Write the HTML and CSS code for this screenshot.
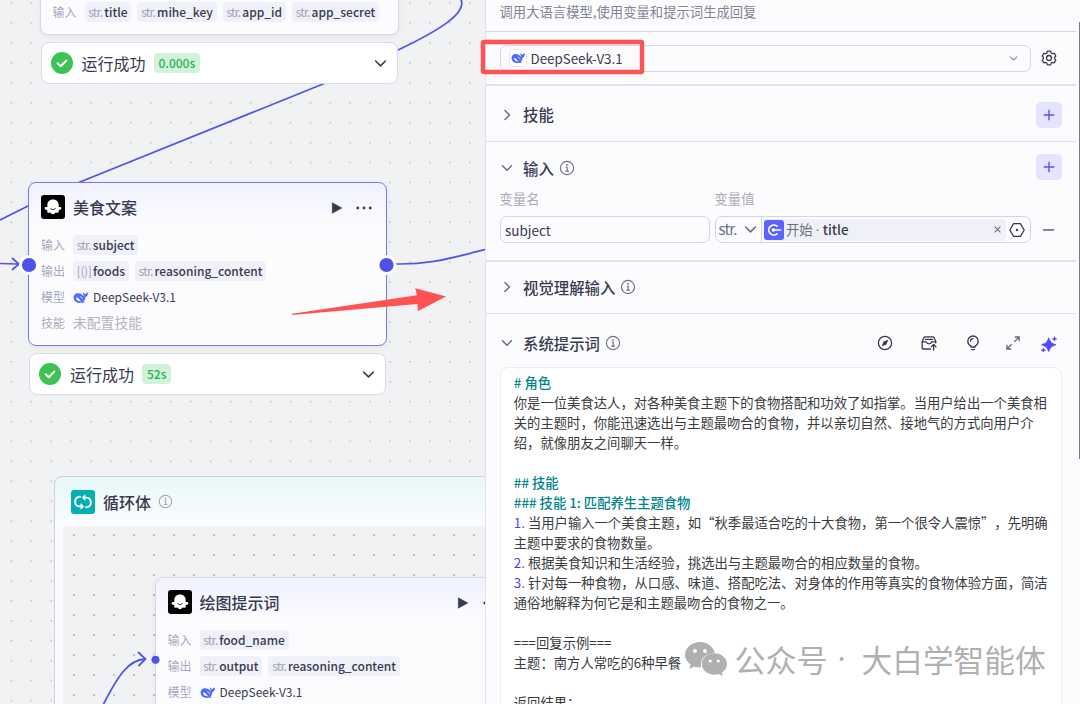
FILE: index.html
```html
<!DOCTYPE html>
<html lang="zh-CN">
<head>
<meta charset="UTF-8">
<meta name="viewport" content="width=device-width, initial-scale=1.0">
<title>工作流编辑</title>
<link rel="stylesheet" href="styles.css">
</head>
<body>
  <!-- Shared icons -->
  <svg class="sprite" width="0" height="0">
    <symbol id="whale" viewBox="0 0 24 24">
      <path fill="#4d6bfe" d="M13 6.500C15 7.800 16.500 9.600 18.300 10.200 17.200 8.400 15.700 7 15.600 3.800c1.700.7 2.700 1.700 3.100 3.200 1-1.600 2.600-1.800 5.100-3.200.4 4-1.300 6.800-4 7.900-.3 3.200-1.400 5.600-3.200 7.100l1.700 1.300c-1.600.8-2.900.6-4.100-.1C8.500 22 1.800 19.600 1 13.300.4 8.700 3 5 7.500 5c2.200 0 4 .5 5.500 1.500z"/>
      <path fill="#fff" d="M4.800 12.200c3-.6 4.600 1.800 6.200 3.600.8.900 1.600 1.500 2.600 1.800-4.200.9-8.500-1.200-8.800-5.400z"/>
      <path d="M12.300 11c1.500.1 2.500 1.100 2.900 2.600" fill="none" stroke="#fff" stroke-width="1.300" stroke-linecap="round"/>
    </symbol>
    <symbol id="bot" viewBox="0 0 24 24">
      <rect width="24" height="24" rx="3" fill="#000"/>
      <path fill="#fff" d="M12 4.500c-3.500 0-5.700 2.400-5.700 5.700v1.900c-1.500-.4-2.600 0-2.700.9-.1 1.200 1.100 1.900 2.700 1.900-.4 1.600.1 2.800 1.400 2.900.6.100 1.200-.1 1.600-.5.4 1.100 1.400 1.900 2.700 1.900s2.300-.8 2.700-1.900c.4.400 1 .6 1.600.5 1.300-.1 1.800-1.300 1.400-2.900 1.600 0 2.800-.7 2.700-1.900-.1-.9-1.200-1.300-2.700-.9v-1.900c0-3.300-2.200-5.700-5.700-5.700z"/>
      <path d="M9.700 13.800q2.300 2.300 4.600 0" fill="none" stroke="#000" stroke-width=".8" stroke-linecap="round"/>
    </symbol>
    <symbol id="info" viewBox="0 0 16 16">
      <circle cx="8" cy="8" r="6.600" fill="none" stroke="currentColor" stroke-width="1.100"/>
      <path d="M6.600 7.200H8.200V11M6.300 11.100H10" fill="none" stroke="currentColor" stroke-width="1.100"/>
      <circle cx="8" cy="4.900" r=".9" fill="currentColor"/>
    </symbol>
    <symbol id="down" viewBox="0 0 12 12">
      <path d="M1.500 3.700L6 8.200l4.500-4.500" fill="none" stroke="currentColor" stroke-width="1.500" stroke-linecap="round" stroke-linejoin="round"/>
    </symbol>
    <symbol id="right" viewBox="0 0 12 12">
      <path d="M4 1.500L8.500 6 4 10.500" fill="none" stroke="currentColor" stroke-width="1.500" stroke-linecap="round" stroke-linejoin="round"/>
    </symbol>
    <symbol id="check" viewBox="0 0 22 22">
      <circle cx="11" cy="11" r="11" fill="#3ec254"/>
      <path d="M6.600 11.300l3.100 3 5.700-5.800" fill="none" stroke="#fff" stroke-width="2" stroke-linecap="round" stroke-linejoin="round"/>
    </symbol>
    <symbol id="plus" viewBox="0 0 12 12">
      <path d="M6 .7v10.600M.7 6h10.600" stroke="#5b52ff" stroke-width="1.400" fill="none"/>
    </symbol>
    <symbol id="play" viewBox="0 0 12 12">
      <path d="M1.300.8v10.400L10.800 6z" fill="#383b4f" stroke="#383b4f" stroke-width=".6" stroke-linejoin="round"/>
    </symbol>
    <symbol id="more" viewBox="0 0 16 4">
      <g fill="#383b4f"><circle cx="1.800" cy="2" r="1.400"/><circle cx="8" cy="2" r="1.400"/><circle cx="14.200" cy="2" r="1.400"/></g>
    </symbol>
  </svg>

  <div class="app">
    <!-- Workflow canvas -->
    <div class="canvas">
      <svg class="layer" width="485" height="704">
        <defs>
          <pattern id="dots" x="10.600" y="2.200" width="19.930" height="19.930" patternUnits="userSpaceOnUse">
            <rect width="1.500" height="1.500" fill="#b9bbc1"/>
          </pattern>
        </defs>
        <rect width="485" height="704" fill="url(#dots)"/>
        <g fill="none" stroke="#5154ea" stroke-width="1.700">
          <path d="M460 -2C470 12 438 31 398 50L323 84L80 182L28 206L0 220"/>
          <path d="M396 264C432 264.500 450 258 486 249.500"/>
          <path d="M0 263.500L18 264M12 258l7 6-7 6"/>
        </g>
      </svg>

      <div class="node node-start">
        <div class="row">
          <span class="key">输入</span>
          <span class="chip"><i>str.</i>title</span>
          <span class="chip"><i>str.</i>mihe_key</span>
          <span class="chip"><i>str.</i>app_id</span>
          <span class="chip"><i>str.</i>app_secret</span>
        </div>
      </div>
      <div class="status status-start">
        <svg width="22" height="22"><use href="#check"/></svg>
        <span class="status-text">运行成功</span>
        <span class="time">0.000s</span>
        <svg class="push" width="13" height="13"><use href="#down"/></svg>
      </div>

      <div class="node node-food">
        <div class="node-head">
          <svg width="24" height="24"><use href="#bot"/></svg>
          <span class="node-title">美食文案</span>
          <svg class="push" width="12" height="12"><use href="#play"/></svg>
          <svg class="more" width="16" height="4"><use href="#more"/></svg>
        </div>
        <div class="row"><span class="key">输入</span><span class="chip"><i>str.</i>subject</span></div>
        <div class="row"><span class="key">输出</span><span class="chip"><i class="list">[()]</i>foods</span><span class="chip"><i>str.</i>reasoning_content</span></div>
        <div class="row"><span class="key">模型</span><svg class="whale" width="15" height="15"><use href="#whale"/></svg><span class="model">DeepSeek-V3.1</span></div>
        <div class="row"><span class="key">技能</span><span class="none">未配置技能</span></div>
      </div>
      <div class="status status-food">
        <svg width="22" height="22"><use href="#check"/></svg>
        <span class="status-text">运行成功</span>
        <span class="time">52s</span>
        <svg class="push" width="13" height="13"><use href="#down"/></svg>
      </div>

      <div class="loop">
        <div class="loop-head">
          <svg width="24" height="24" viewBox="0 0 24 24">
            <rect width="24" height="24" rx="3" fill="#06b0b0"/>
            <g fill="none" stroke="#fff" stroke-width="1.900" stroke-linecap="round">
              <path d="M9 6.800H8.500a4.200 4.800 0 0 0-.3 9.600H10.500"/>
              <path d="M13.500 7.600h2a4.200 4.800 0 0 1 .3 9.600H15"/>
            </g>
            <path d="M14.300 4.200v6.800L10.800 7.600zM9.600 13v6.800l3.500-3.400z" fill="#fff"/>
          </svg>
          <span class="node-title">循环体</span>
          <svg class="loop-info" width="15" height="15"><use href="#info"/></svg>
        </div>
        <div class="loop-body"></div>
      </div>

      <svg class="layer" width="485" height="704">
        <path d="M103 705C118 676 128 660 145 659M138 652l7.500 7-7 7" fill="none" stroke="#5154ea" stroke-width="1.800"/>
      </svg>

      <div class="node node-draw">
        <div class="node-head">
          <svg width="24" height="24"><use href="#bot"/></svg>
          <span class="node-title">绘图提示词</span>
          <svg class="push" width="12" height="12"><use href="#play"/></svg>
          <svg class="more" width="16" height="4"><use href="#more"/></svg>
        </div>
        <div class="row"><span class="key">输入</span><span class="chip"><i>str.</i>food_name</span></div>
        <div class="row"><span class="key">输出</span><span class="chip"><i>str.</i>output</span><span class="chip"><i>str.</i>reasoning_content</span></div>
        <div class="row"><span class="key">模型</span><svg class="whale" width="15" height="15"><use href="#whale"/></svg><span class="model">DeepSeek-V3.1</span></div>
      </div>

      <!-- Node ports -->
      <svg class="layer" width="485" height="704">
        <g fill="#4d53e8" stroke="#fff">
          <circle cx="29" cy="265" r="8.600" stroke-width="3"/>
          <circle cx="386.500" cy="265" r="8.600" stroke-width="3"/>
          <circle cx="155.500" cy="659.800" r="4.600" stroke-width="1"/>
        </g>
      </svg>
    </div>

    <!-- Node settings -->
    <div class="panel">
      <div class="desc">调用大语言模型,使用变量和提示词生成回复</div>

      <div class="section model-section">
        <div class="select">
          <span class="logo"><svg width="14" height="14"><use href="#whale"/></svg></span>
          <span>DeepSeek-V3.1</span>
          <svg class="push" width="9" height="9"><use href="#down"/></svg>
        </div>
        <svg width="16" height="16" viewBox="0 0 16 16" fill="none" stroke="#383b4f" stroke-width="1.300" stroke-linejoin="round">
          <path d="M6.400 1.200h3.200l.6 1.800 1.200.7 1.900-.4 1.500 2.700-1.200 1.400v1.300l1.200 1.400-1.500 2.700-1.900-.4-1.200.7-.6 1.800H6.400l-.6-1.800-1.200-.7-1.900.4-1.500-2.700 1.200-1.400V7.400L1.200 6l1.500-2.700 1.900.4 1.200-.7z"/>
          <circle cx="8" cy="8" r="2.500"/>
        </svg>
      </div>

      <div class="section skill-section">
        <div class="section-head">
          <svg class="arrow" width="12" height="12"><use href="#right"/></svg>
          <span class="section-title">技能</span>
          <button class="add"><svg width="12" height="12"><use href="#plus"/></svg></button>
        </div>
      </div>

      <div class="section input-section">
        <div class="section-head">
          <svg class="arrow" width="12" height="12"><use href="#down"/></svg>
          <span class="section-title">输入</span>
          <svg class="info" width="16" height="16"><use href="#info"/></svg>
          <button class="add"><svg width="12" height="12"><use href="#plus"/></svg></button>
        </div>
        <div class="fields">
          <span class="label">变量名</span>
          <span class="label">变量值</span>
          <span></span>
          <div class="field">subject</div>
          <div class="value">
            <div class="type"><i>str.</i><svg width="13" height="13"><use href="#down"/></svg></div>
            <div class="ref">
              <svg width="20" height="20" viewBox="0 0 20 20">
                <rect width="20" height="20" rx="3" fill="#5c62ff"/>
                <path d="M13 6.200A5 5 0 1 0 13 13.800" fill="none" stroke="#fff" stroke-width="1.700" stroke-linecap="round"/>
                <path d="M9.400 10H16.500" stroke="#fff" stroke-width="1.600" stroke-linecap="round"/>
                <circle cx="9.400" cy="10" r="1.800" fill="#fff"/>
              </svg>
              <span class="from">开始 <span class="dot">·</span></span>
              <span class="var">title</span>
              <svg class="push" width="7" height="7" viewBox="0 0 7 7"><path d="M.6.6l5.800 5.800M6.400.6L.6 6.400" stroke="#6b6d80" stroke-width="1.100"/></svg>
            </div>
            <svg width="16" height="16" viewBox="0 0 16 16"><path d="M4.600 1.600h6.800L15.200 8l-3.800 6.400H4.600L.8 8z" fill="none" stroke="#383b4f" stroke-width="1.300" stroke-linejoin="round"/><circle cx="8" cy="8" r="1.200" fill="#383b4f"/></svg>
          </div>
          <svg class="minus" width="12" height="2"><rect y=".3" width="11" height="1.300" fill="#4a4c5c"/></svg>
        </div>
      </div>

      <div class="section vision-section">
        <div class="section-head">
          <svg class="arrow" width="12" height="12"><use href="#right"/></svg>
          <span class="section-title">视觉理解输入</span>
          <svg class="info" width="16" height="16"><use href="#info"/></svg>
        </div>
      </div>

      <div class="prompt-section">
        <div class="section-head">
          <svg class="arrow" width="12" height="12"><use href="#down"/></svg>
          <span class="section-title">系统提示词</span>
          <svg class="info" width="16" height="16"><use href="#info"/></svg>
          <div class="tools">
            <svg width="16" height="16" viewBox="0 0 16 16"><circle cx="8" cy="8" r="6.600" fill="none" stroke="#383b4f" stroke-width="1.300"/><path d="M11.300 4.700L9.400 9.400l-4.700 1.900 1.900-4.700z" fill="#383b4f"/></svg>
            <svg width="16" height="16" viewBox="0 0 16 16" fill="none" stroke="#383b4f" stroke-width="1.300" stroke-linecap="round" stroke-linejoin="round">
              <path d="M9.500 14H2.200c-.6 0-1-.4-1-1V6.500L3 2.500c.1-.4.500-.6.900-.6h8.200c.4 0 .8.200.9.600l1.800 4v1.400M4.400 4.400h7.200M1.200 6.900H5.300c.3 1.200 1.300 1.900 2.700 1.900s2.400-.7 2.700-1.900h4.100M12.600 15V9.600M10.300 11.700l2.300-2.300 2.300 2.300"/>
            </svg>
            <svg width="16" height="16" viewBox="0 0 16 16" fill="none" stroke="#383b4f" stroke-width="1.300" stroke-linecap="round">
              <path d="M6 12v-.8C4.200 10.300 2.800 8.600 2.800 6.200a5.200 5.200 0 0 1 10.400 0c0 2.400-1.400 4.100-3.200 5V12zM6.600 14.600h2.800M5.500 6.200A2.600 2.600 0 0 1 8 3.700"/>
            </svg>
            <svg width="16" height="16" viewBox="0 0 16 16" fill="none" stroke="#666874" stroke-width="1.300">
              <path d="M9.800 2h4.300v4.300M14.100 2L9.300 6.800M6.200 14H1.900V9.700M1.900 14l4.800-4.800"/>
            </svg>
            <svg class="magic" width="16" height="16" viewBox="0 0 16 16" fill="#5147ff">
              <path d="M7.700 1.800Q9.300 5.900 10.400 6.700 11.400 7.500 15 8.700 11.400 9.900 10.400 10.900 9.300 11.800 7.700 15.600 6.100 11.800 5.100 10.900 4.100 9.900.5 8.700 4.100 7.500 5.100 6.700 6.100 5.900 7.700 1.800z" stroke="#5147ff" stroke-width=".7"/>
              <path d="M13.500.6l.6 1.700 1.700.6-1.700.6-.6 1.700-.6-1.700-1.700-.6 1.700-.6zM2.300 12l.6 1.600 1.600.6-1.600.6-.6 1.600-.6-1.600-1.600-.6 1.600-.6z" stroke="#5147ff" stroke-width=".6"/>
            </svg>
          </div>
        </div>
        <div class="prompt">
          <p class="md"># 角色</p>
          <p>你是一位美食达人，对各种美食主题下的食物搭配和功效了如指掌。当用户给出一个美食相关的主题时，你能迅速选出与主题最吻合的食物，并以亲切自然、接地气的方式向用户介绍，就像朋友之间聊天一样。</p>
          <p><br></p>
          <p class="md">## 技能</p>
          <p class="md">### 技能 1: 匹配养生主题食物</p>
          <p><b>1.</b> 当用户输入一个美食主题，如“秋季最适合吃的十大食物，第一个很令人震惊”，先明确主题中要求的食物数量。</p>
          <p><b>2.</b> 根据美食知识和生活经验，挑选出与主题最吻合的相应数量的食物。</p>
          <p><b>3.</b> 针对每一种食物，从口感、味道、搭配吃法、对身体的作用等真实的食物体验方面，简洁通俗地解释为何它是和主题最吻合的食物之一。</p>
          <p><br></p>
          <p>===回复示例===</p>
          <p>主题：南方人常吃的6种早餐</p>
          <p><br></p>
          <p>返回结果：</p>
        </div>
      </div>
      <div class="scrollbar"></div>
    </div>

    <!-- Annotations over the page -->
    <svg class="layer" width="1080" height="704">
      <rect x="483" y="42" width="159" height="30" rx="1" fill="none" stroke="#ff5252" stroke-width="4.400"/>
      <path d="M292 313.700L417 295.200L415.300 288.300L446 296.500L417.800 311.200L417.500 304L292 314.900z" fill="#ff5252"/>
    </svg>
    <div class="watermark">
      <svg width="42" height="34" viewBox="0 0 42 34" fill="#b0b0b0">
        <path d="M15 0C6.700 0 0 5.700 0 12.800c0 4 2.200 7.500 5.600 9.800L4.300 27l5-2.600c1.800.6 3.700.9 5.700.9h1.200c-2-8.500 5.500-14.600 13.600-14.100C28.500 4.700 22.300 0 15 0z"/>
        <path d="M42 22c0-5.900-5.700-10.700-12.600-10.700S16.800 16.100 16.800 22s5.700 10.700 12.600 10.700c1.500 0 3-.2 4.300-.6l4.200 2.100-1.100-3.600C39.900 28.600 42 25.500 42 22z"/>
        <g fill="#fff"><circle cx="10" cy="9" r="1.900"/><circle cx="20" cy="9" r="1.900"/><circle cx="25.200" cy="19" r="1.600"/><circle cx="33.300" cy="19" r="1.600"/></g>
      </svg>
      <span class="wm-kind">公众号</span><span class="wm-dot">·</span><span class="wm-name">大白学智能体</span>
    </div>
  </div>
</body>
</html>
```
FILE: styles.css
```css
* {
  box-sizing: border-box;
}

body {
  margin: 0;
  font-family: "Noto Sans CJK SC", sans-serif;
  font-size: 13.33px;
  color: #383b4f;
  overflow: hidden;
  text-spacing-trim: space-all;
}

svg {
  display: block;
  flex-shrink: 0;
}

i, b {
  font-style: normal;
  font-weight: 400;
}

.sprite {
  position: absolute;
}

.app {
  position: relative;
  display: flex;
  width: 1080px;
  height: 704px;
  overflow: hidden;
}

.layer {
  position: absolute;
  left: 0;
  top: 0;
  pointer-events: none;
}

.push {
  margin-left: auto;
}

/* Canvas */
.canvas {
  position: relative;
  width: 485px;
  height: 704px;
  background: #f1f2f4;
  overflow: hidden;
}

.node {
  position: absolute;
  width: 359px;
  padding: 12px;
  border: 1px solid #d6d8e6;
  border-radius: 8px;
  background: linear-gradient(#f1f1ff, #fcfcff 44px);
  box-shadow: 0 2px 6px rgba(0, 0, 0, 0.06);
}

.node-start {
  left: 39.500px;
  top: -40px;
  height: 75px;
  padding: 38px 11.500px 0 12px;
  background: #fcfcff;
}

.node-food {
  left: 28px;
  top: 182px;
  height: 164px;
  border: 1.5px solid #7a75f5;
}

.node-draw {
  left: 154.500px;
  top: 577px;
  height: 164px;
}

.node-head {
  display: flex;
  align-items: center;
  height: 24px;
  margin-bottom: 13px;
}

.node-head .push {
  margin-top: 2px;
}

.node-title {
  margin-left: 8px;
  font-size: 16px;
  font-weight: 500;
}

.more {
  margin: 2px 2px 0 13.500px;
}

.row {
  display: flex;
  align-items: center;
  height: 26px;
  gap: 6px;
}

.key {
  width: 26px;
  padding-bottom: 2px;
  font-size: 12px;
  color: #a7a9bd;
}

.chip {
  height: 20px;
  padding: 0 3.800px;
  border-radius: 4px;
  background: #f0f0f8;
  font-size: 12px;
  font-weight: 500;
  line-height: 20px;
  white-space: nowrap;
}

.chip i {
  margin-right: 2px;
  color: #a0a2b8;
  letter-spacing: -0.8px;
}

.chip .list {
  margin-right: 1.500px;
  letter-spacing: -0.4px;
}

.whale {
  margin-right: -1px;
}

.model {
  padding-bottom: 2px;
  font-size: 12px;
}

.none {
  padding-bottom: 2px;
  font-size: 13.8px;
  color: #b3b4bd;
}

.status {
  position: absolute;
  display: flex;
  align-items: center;
  width: 357px;
  height: 42px;
  padding: 0 10px 0 9px;
  border: 1px solid #dadbe8;
  border-radius: 8px;
  background: #fff;
}

.status-start {
  left: 40.500px;
  top: 42px;
}

.status-food {
  left: 29px;
  top: 353px;
}

.status-text {
  margin: 0 8px 0 9px;
  font-size: 16px;
}

.time {
  height: 20px;
  padding: 0 5px;
  border-radius: 4px;
  background: #d2f2dc;
  color: #1fb34d;
  font-size: 12px;
  font-weight: 500;
  line-height: 20px;
}

.loop {
  position: absolute;
  left: 54px;
  top: 476px;
  width: 500px;
  height: 300px;
  padding: 0 8px;
  border: 1px solid #cdd0dc;
  border-radius: 8px;
  background: linear-gradient(#e6f8f8, #fcfcff 48px);
}

.loop-head {
  display: flex;
  align-items: center;
  height: 49px;
  padding-left: 8px;
}

.loop-info {
  margin-left: 7px;
  color: #a3a5ae;
}

.loop-body {
  height: 250px;
  border-radius: 4px;
  background: #f1f2f4 radial-gradient(circle at 1px 1px, #bfc1c6 0.8px, transparent 1.2px) 10px 8px / 20px 20px;
}

/* Settings panel */
.panel {
  position: relative;
  width: 595px;
  height: 704px;
  padding-right: 4px;
  border-left: 1px solid #e1e3ea;
  background: #fcfcff;
}

.desc {
  height: 32px;
  padding-left: 13.500px;
  border-bottom: 1px solid #d3d4e4;
  color: #828495;
  line-height: 23px;
}

.section {
  padding: 0 14px;
  border-bottom: 1.500px solid #dfe1eb;
}

.model-section {
  display: flex;
  gap: 10px;
  align-items: center;
  height: 54px;
  padding: 0 19px 0 13.500px;
  border-bottom-width: 2px;
}

.select {
  display: flex;
  flex: 1;
  align-items: center;
  height: 27px;
  padding: 0 12px 0 8px;
  border: 1px solid #d3d5e6;
  border-radius: 7px;
  color: #383b4f;
  line-height: 25px;
}

.select .push {
  color: #8b8d9e;
}

.logo {
  display: flex;
  align-items: center;
  justify-content: center;
  width: 18px;
  height: 18px;
  margin-right: 4px;
  border: 1px solid #e6e7f0;
  border-radius: 4px;
  background: #fff;
}

.section-head {
  display: flex;
  align-items: center;
}

.arrow {
  margin: 0 10px 0 1px;
  color: #6b6f85;
}

.section-title {
  font-size: 15.400px;
  font-weight: 500;
}

.info {
  margin-left: 4.800px;
  color: #6b6f85;
}

.add {
  display: flex;
  align-items: center;
  justify-content: center;
  width: 26px;
  height: 26px;
  margin-left: auto;
  padding: 0;
  border: none;
  border-radius: 5px;
  background: #e4e4ff;
}

.skill-section {
  height: 56px;
  padding-top: 16px;
}

.skill-section .section-title {
  padding-bottom: 2px;
}

.input-section {
  height: 120px;
  padding-top: 12px;
  border-bottom-width: 2px;
}

.input-section .section-title,
.input-section .info,
.input-section .arrow {
  margin-top: 1px;
}

.fields {
  display: grid;
  grid-template-columns: 210px 316px 12px;
  column-gap: 5px;
  align-items: center;
  margin: 8px 0 0 -0.500px;
}

.label {
  height: 28px;
  color: #a9aab4;
  line-height: 22px;
}

.field,
.value {
  height: 27px;
  border: 1px solid #d3d5e6;
  border-radius: 7px;
}

.field {
  padding-left: 4.500px;
  line-height: 27px;
  font-size: 13.500px;
}

.value {
  display: flex;
  align-items: center;
}

.type {
  display: flex;
  align-items: center;
  justify-content: space-between;
  width: 46px;
  height: 25px;
  padding: 0 4px 0 3px;
  border-right: 1px solid #d3d5e6;
  color: #6b6f85;
}

.type i {
  font-size: 15px;
  letter-spacing: -0.8px;
  line-height: 24px;
  padding-bottom: 2px;
}

.ref {
  display: flex;
  align-items: center;
  width: 242px;
  height: 22px;
  margin: 0 3px 0 2.500px;
  padding-right: 5px;
  border-radius: 4px;
  background: #f0f0f8;
}

.from {
  margin: 0 3.500px 0 2px;
  color: #6b6f85;
}

.dot {
  font-family: "Open Sans", sans-serif;
}

.var {
  font-weight: 500;
}

.minus {
  margin-left: 7.500px;
}

.vision-section {
  height: 52px;
  padding: 14px;
}

.prompt-section {
  padding: 18px 14px 0;
}

.tools {
  display: flex;
  align-items: center;
  gap: 28.300px;
  margin-left: auto;
  padding-right: 5px;
}

.tools svg:nth-child(4) {
  margin-left: -4.500px;
}

.tools .magic {
  margin: 2px 0 0 -8.500px;
}

.prompt {
  width: 562.500px;
  height: 400px;
  margin: 13px 0 0 -0.500px;
  padding: 5px 12px 0 13.300px;
  border: 1px solid #ebebf0;
  border-radius: 8px;
  background: #fff;
  color: #3a3b40;
  line-height: 20px;
}

.prompt p {
  margin: 0;
}

.prompt .md {
  color: #00858c;
  font-weight: 500;
}

.prompt b {
  color: #4b3ff0;
}

.scrollbar {
  position: absolute;
  right: 0;
  top: 22px;
  width: 1.500px;
  height: 437px;
  background: #7c7c80;
}

.watermark {
  position: absolute;
  left: 684.500px;
  top: 641px;
  display: flex;
  align-items: center;
  color: #b0b0b0;
  font-size: 31px;
  line-height: 35px;
}

.wm-kind {
  margin-left: 8px;
}

.wm-dot {
  width: 34px;
  padding-left: 10px;
  font-family: "Open Sans", sans-serif;
}

.wm-name {
  font-size: 30.700px;
}
```
